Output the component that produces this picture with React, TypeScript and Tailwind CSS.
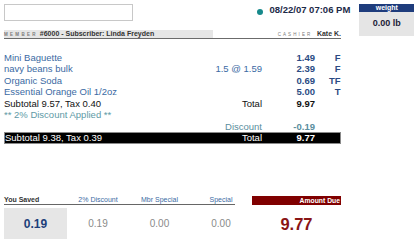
const items = [
  { name: "Mini Baguette", qty: "", price: "1.49", flag: "F" },
  { name: "navy beans bulk", qty: "1.5 @ 1.59", price: "2.39", flag: "F" },
  { name: "Organic Soda", qty: "", price: "0.69", flag: "TF" },
  { name: "Essential Orange Oil 1/2oz", qty: "", price: "5.00", flag: "T" },
];

const row = "grid grid-cols-[188px_70px_53px_26px] h-[11.5px] leading-[11.5px] whitespace-nowrap";

export default function App() {
  return (
    <div className="w-[420px] h-[252px] overflow-hidden bg-white font-['Liberation_Sans',Arial,sans-serif] flex pl-[4px] pt-[4px]">
      <div className="w-[337px] shrink-0 flex flex-col">
        {/* header: search + clock */}
        <div className="flex h-[17px] items-start">
          <div className="w-[129px] h-[17px] shrink-0 border border-[#c8c8c8] bg-white" />
          <div className="ml-[124px] shrink-0 flex items-start whitespace-nowrap">
            <span className="mt-[5px] mr-[6.5px] w-[6px] h-[6px] shrink-0 rounded-full bg-[#16898b]" />
            <span className="mt-[1px] text-[9.5px] leading-[10px] font-bold text-[#1c2a48]">08/22/07 07:06 PM</span>
          </div>
        </div>

        {/* member / cashier */}
        <div className="mt-[9px] flex h-[9px] border-b border-[#6b6b6b] whitespace-nowrap">
          <div className="w-[209px] shrink-0 bg-[#e6e6e6] flex items-baseline leading-[8px]">
            <span className="text-[4.5px] font-bold tracking-[2.3px] text-[#7a7a7a]">MEMBER</span>
            <span className="ml-[2px] text-[7px] font-bold text-[#333]">#6000 - Subscriber: Linda Freyden</span>
          </div>
          <div className="flex-1 flex items-baseline justify-end leading-[8px]">
            <span className="text-[4.5px] tracking-[2.1px] text-[#7a7a7a]">CASHIER</span>
            <span className="ml-[4.5px] text-[7px] font-bold text-[#333]">Kate K.</span>
          </div>
        </div>

        {/* receipt lines */}
        <div className="mt-[12.6px] text-[9.5px]">
          {items.map((it) => (
            <div key={it.name} className={row}>
              <span className="text-[#3b6aa3]">{it.name}</span>
              <span className="text-right text-[#3b6aa3]">{it.qty}</span>
              <span className="text-right font-bold text-[#2b4b83]">{it.price}</span>
              <span className="text-right pr-[0.5px] font-bold text-[#2b4b83]">{it.flag}</span>
            </div>
          ))}
          <div className={row}>
            <span className="text-[#111]">Subtotal 9.57, Tax 0.40</span>
            <span className="text-right text-[#111]">Total</span>
            <span className="text-right font-bold text-[#111]">9.97</span>
            <span />
          </div>
          <div className={row}>
            <span className="text-[#5e9aa6]">** 2% Discount Applied **</span>
          </div>
          <div className={row}>
            <span />
            <span className="text-right text-[#5a8e9e]">Discount</span>
            <span className="text-right font-bold text-[#5a8e9e]">-0.19</span>
            <span />
          </div>
          <div className="grid grid-cols-[187px_70px_53px_25px] h-[12px] leading-[10px] bg-black border border-[#8a8a8a] text-white whitespace-nowrap">
            <span>Subtotal 9.38, Tax 0.39</span>
            <span className="text-right">Total</span>
            <span className="text-right font-bold">9.77</span>
            <span />
          </div>
        </div>

        {/* savings summary */}
        <div className="flex mt-[52.4px] whitespace-nowrap">
          <div className="w-[248px] shrink-0">
            <div className="flex h-[8px] text-[7px] leading-[8px] text-[#3b6aa3]">
              <div className="w-[63px] font-bold text-[#333]">You Saved</div>
              <div className="w-[62px] text-center">2% Discount</div>
              <div className="w-[61px] text-center">Mbr Special</div>
              <div className="w-[62px] text-center">Special</div>
            </div>
            <div className="w-[231px] h-px bg-[#666]" />
          </div>
          <div className="w-[89px] shrink-0 h-[9px] bg-[#800000] text-right pr-[1px] text-[6.8px] leading-[9px] font-bold text-white">
            Amount Due
          </div>
        </div>
        <div className="flex h-[31px] mt-[3px] items-center">
          <div className="w-[63px] h-full bg-[#e6e6e6] flex items-center justify-center text-[12px] font-bold text-[#1d3f7a]">
            0.19
          </div>
          <div className="w-[62px] text-center text-[10px] text-[#8a8a8a]">0.19</div>
          <div className="w-[61px] text-center text-[10px] text-[#8a8a8a]">0.00</div>
          <div className="w-[62px] text-center text-[10px] text-[#8a8a8a]">0.00</div>
          <div className="w-[89px] text-center text-[16.5px] font-bold text-[#8a1515]">9.77</div>
        </div>
      </div>

      {/* scale weight */}
      <div className="ml-[18.3px] w-[55px] shrink-0 h-[32px] flex flex-col">
        <div className="h-[8px] bg-[#1e3c7c] text-center text-[7px] leading-[8px] font-bold text-white">weight</div>
        <div className="flex-1 bg-[#e5e5e5] flex items-center justify-center text-[9px] font-bold text-[#1c2238]">
          0.00 lb
        </div>
      </div>
    </div>
  );
}
